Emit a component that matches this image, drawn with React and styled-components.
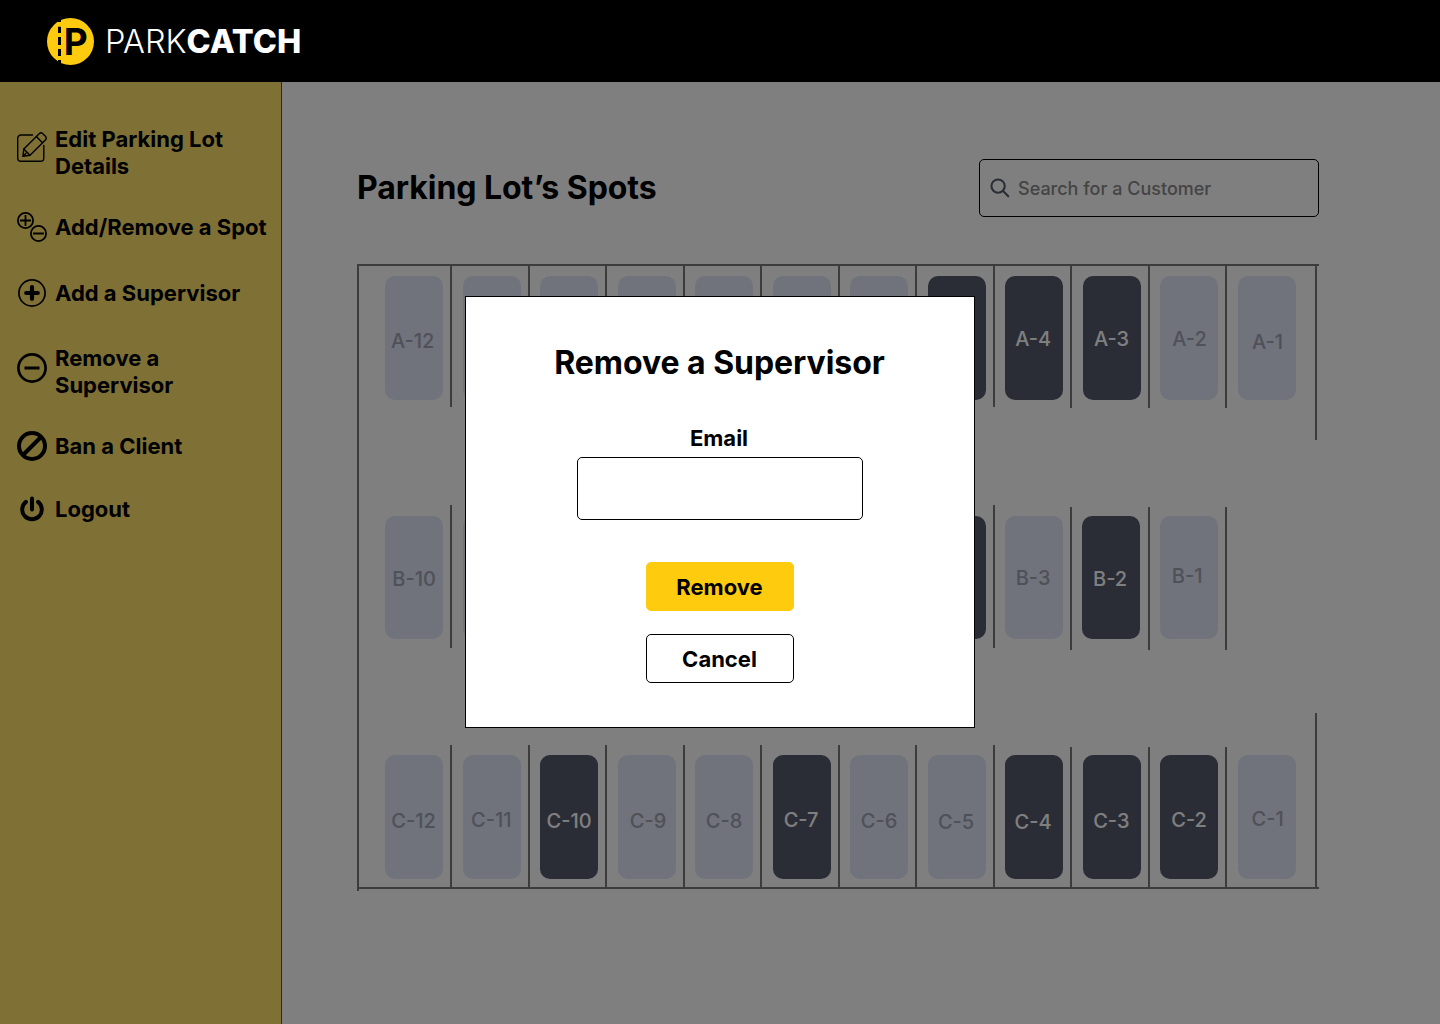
import React from "react";
import styled, { createGlobalStyle } from "styled-components";

const Global = createGlobalStyle`
  * { box-sizing: border-box; }
  body { margin: 0; font-family: Inter, "Liberation Sans", sans-serif; color: #000; }
  button, input { font: inherit; color: inherit; }
`;

const Page = styled.div`
  position: relative;
  height: 1024px;
  display: flex;
  flex-direction: column;
  overflow: hidden;
  background: #fff;
`;

const Header = styled.header`
  flex: none;
  height: 82px;
  padding: 0 47px;
  display: flex;
  align-items: center;
  background: #000;
  color: #fff;
`;

const LogoMark = styled.svg`
  width: 48px;
  height: 48px;
  margin-right: 10px;
`;

const LogoLetter = styled.text`
  font-size: 37px;
  font-weight: 700;
`;

const Wordmark = styled.span`
  margin-top: 1px;
  font-size: 32.5px;
  font-weight: 270;
  line-height: 40px;
`;

const Strong = styled.b`
  font-weight: 830;
`;

const Body = styled.div`
  flex: 1;
  display: flex;
`;

const Sidebar = styled.nav`
  flex: none;
  width: 282px;
  padding: 44px 0 0 17px;
  display: flex;
  flex-direction: column;
  background: #ffe16c;
  border-right: 1px solid #555;
`;

const NavItem = styled.a`
  display: flex;
  align-items: center;
  gap: 8px;
  min-height: 27px;
  margin-bottom: ${(p) => p.$after}px;
  font-size: 22px;
  font-weight: 700;
  line-height: 27px;
  white-space: nowrap;
`;

const NavIcon = styled.svg`
  flex: none;
  width: 30px;
  height: 30px;
  margin: -3px 0 ${(p) => p.$lift - 1}px;
  fill: none;
  stroke: #000;
`;

const Main = styled.main`
  flex: 1;
  padding: 77px 121px 0 75px;
`;

const TopRow = styled.div`
  display: flex;
  justify-content: space-between;
  align-items: center;
  height: 58px;
`;

const Title = styled.h1`
  margin: 0 0 2px;
  font-size: 32px;
  font-weight: 700;
  line-height: 39px;
  letter-spacing: -0.05px;
`;

const SearchBox = styled.label`
  width: 340px;
  height: 58px;
  padding-left: 10px;
  display: flex;
  align-items: center;
  gap: 8px;
  border: 1px solid #000;
  border-radius: 5px;
`;

const SearchIcon = styled.svg`
  width: 20px;
  height: 20px;
  fill: none;
  stroke: #54586c;
  stroke-width: 2.2;
  stroke-linecap: round;
`;

const SearchInput = styled.input`
  flex: 1;
  min-width: 0;
  padding: 0;
  border: 0;
  outline: 0;
  background: none;
  font-size: 18px;
  font-weight: 450;
  &::placeholder { color: #888; opacity: 1; }
`;

const Lot = styled.section`
  margin-top: 47px;
  width: 962px;
  height: 627px;
  border-top: 2px solid #787878;
  border-left: 2px solid #787878;
  display: grid;
  grid-template-columns: 956px 2px;
`;

const Rows = styled.div`
  height: 623px;
  width: 960px;
  border-bottom: 2px solid #787878;
  display: flex;
  flex-direction: column;
  justify-content: space-between;
`;

const RightWall = styled.div`
  height: 622px;
  display: flex;
  flex-direction: column;
  justify-content: space-between;
`;

const WallPart = styled.span`
  height: ${(p) => p.$length}px;
  background: #787878;
`;

const LotRow = styled.div`
  display: flex;
  align-items: flex-start;
  height: ${(p) => p.$height}px;
  padding-left: 15.8px;
`;

const Stall = styled.div`
  flex: none;
  width: 77.5px;
  height: ${(p) => p.$height}px;
  margin-top: ${(p) => p.$drop}px;
  padding: ${(p) => p.$inset}px 0 0 ${(p) => p.$left}px;
  border-right: ${(p) => (p.$open ? "0" : "2px solid #787878")};
`;

const Spot = styled.div`
  width: 58px;
  height: 123.5px;
  display: flex;
  align-items: center;
  justify-content: center;
  border-radius: 10px;
  font-size: 20px;
  font-weight: 500;
  line-height: 24px;
  white-space: nowrap;
  background: ${(p) => (p.$taken ? "#54586c" : "#e0e6f9")};
  color: ${(p) => (p.$taken ? "#fff" : "#9ea2b0")};
`;

const SpotLabel = styled.span`
  margin-left: ${(p) => p.$dx * 2}px;
  margin-top: ${(p) => p.$dy * 2}px;
`;

const Overlay = styled.div`
  position: absolute;
  inset: 82px 0 0 0;
  background: rgba(0, 0, 0, 0.5);
`;

const Modal = styled.form`
  position: absolute;
  left: 465px;
  top: 214px;
  width: 510px;
  height: 432px;
  padding: 46px 0 0;
  display: flex;
  flex-direction: column;
  align-items: center;
  background: #fff;
  border: 1px solid #000;
`;

const ModalTitle = styled.h2`
  margin: 0 1px 43px 0;
  font-size: 32px;
  font-weight: 700;
  line-height: 39px;
  letter-spacing: -0.05px;
`;

const FieldLabel = styled.label`
  margin: 0 2px 5px 0;
  font-size: 22px;
  font-weight: 700;
  line-height: 27px;
`;

const Field = styled.input`
  width: 286px;
  height: 63px;
  margin-bottom: 42px;
  padding: 0 12px;
  border: 1px solid #000;
  border-radius: 5px;
  background: #fff;
`;

const Button = styled.button`
  width: 148px;
  height: 49px;
  margin-bottom: 23px;
  padding: 1px 1px 0 0;
  border: 1px solid ${(p) => (p.$primary ? "#ffcb0f" : "#000")};
  border-radius: 5px;
  background: ${(p) => (p.$primary ? "#ffcb0f" : "#fff")};
  font-size: 22px;
  font-weight: 700;
`;

const NAV = [
  {
    label: <>Edit Parking Lot<br />Details</>, after: 34, lift: 10,
    icon: (
      <g strokeWidth="1.4" strokeLinejoin="round" strokeLinecap="round">
        <path d="M15.500 3H4A3.300 3.300 0 0 0 .700 6.300V26A3.300 3.300 0 0 0 4 29.300h19.500a3.300 3.300 0 0 0 3.300-3.300V13.500" />
        <path d="M6 24.200l.800-7.200L22.200 1.700a2.600 2.600 0 0 1 3.600 0l2.600 2.600a2.600 2.600 0 0 1 0 3.600L13 23.300z" />
        <path d="M6.800 17L13 23.300M19.300 4.600l6.200 6.200M6 24.200l3-3" />
      </g>
    ),
  },
  {
    label: "Add/Remove a Spot", after: 39, lift: 0,
    icon: (
      <g strokeWidth="1.8">
        <circle cx="8.500" cy="8.500" r="7.600" />
        <circle cx="21.500" cy="21.500" r="7.600" />
        <path d="M8.500 3v11M3 8.500h11M16 21.500h11" />
      </g>
    ),
  },
  {
    label: "Add a Supervisor", after: 38, lift: 0,
    icon: (
      <g>
        <circle cx="15" cy="15" r="13.100" strokeWidth="1.700" />
        <path d="M15 9.200v11.600M9.200 15h11.600" strokeWidth="4.200" strokeLinecap="round" />
      </g>
    ),
  },
  {
    label: <>Remove a<br />Supervisor</>, after: 34, lift: 6,
    icon: (
      <g strokeWidth="2.700">
        <circle cx="15" cy="15" r="13.600" />
        <path d="M7.500 15h15" strokeWidth="3" />
      </g>
    ),
  },
  {
    label: "Ban a Client", after: 36, lift: 0,
    icon: (
      <g strokeWidth="4">
        <circle cx="15" cy="15" r="13" />
        <path d="M6 24L24 6" />
      </g>
    ),
  },
  {
    label: "Logout", after: 0, lift: 0,
    icon: (
      <g strokeWidth="4" strokeLinecap="round">
        <path d="M8.900 7.900a9.800 9.800 0 1 0 12.200 0" />
        <path d="M15 4.500v11" />
      </g>
    ),
  },
];

const ROW_A = [
  { id: "A-12", dx: -1.5, dy: 3 }, {}, {}, {}, {}, {}, {}, { taken: true },
  { id: "A-4", taken: true, dx: -1, dy: 1 }, { id: "A-3", taken: true, dx: 0, dy: 1 },
  { id: "A-2", dx: 0.5, dy: 1 }, { id: "A-1", dx: 1, dy: 4.3 },
];
const ROW_B = [
  { id: "B-10", dx: 0, dy: 2 }, {}, {}, {}, {}, {}, {}, { taken: true },
  { id: "B-3", dx: -1, dy: 1 }, { id: "B-2", taken: true, dx: -0.5, dy: 2, shift: -1 },
  { id: "B-1", dx: -2, dy: -1 },
];
const ROW_C = [
  { id: "C-12", dx: -0.5, dy: 4.5 }, { id: "C-11", dx: -0.3, dy: 3.5 },
  { id: "C-10", taken: true, dx: 0, dy: 4.5 }, { id: "C-9", dx: 1.5, dy: 4.5 },
  { id: "C-8", dx: 0, dy: 4.5 }, { id: "C-7", taken: true, dx: -0.5, dy: 3.5 },
  { id: "C-6", dx: 0, dy: 4.5 }, { id: "C-5", dx: -0.5, dy: 5.7 },
  { id: "C-4", taken: true, dx: -1, dy: 5.5 }, { id: "C-3", taken: true, dx: -0.3, dy: 4.5 },
  { id: "C-2", taken: true, dx: 0, dy: 3.5 }, { id: "C-1", dx: 1, dy: 2.3 },
];

function Row({ spots, height, stall }) {
  return (
    <LotRow $height={height}>
      {spots.map((s, i) => {
        const g = stall(i);
        return (
          <Stall key={i} $height={g.height} $drop={g.drop} $inset={g.inset} $left={10.3 + (s.shift || 0)} $open={i === 11}>
            <Spot $taken={s.taken}>
              {s.id && <SpotLabel $dx={s.dx} $dy={s.dy}>{s.id}</SpotLabel>}
            </Spot>
          </Stall>
        );
      })}
    </LotRow>
  );
}

export default function App() {
  return (
    <Page>
      <Global />
      <Header>
        <LogoMark viewBox="0 0 48 48">
          <circle cx="23.500" cy="24.500" r="23.500" fill="#ffcb0f" />
          <path d="M11 0h3v5h-3zM11 9.700h3v6.300h-3zM11 20h3v8h-3zM11 32h3v7h-3zM11 43h3v5h-3z" fill="#000" />
          <LogoLetter x="16.800" y="38">P</LogoLetter>
        </LogoMark>
        <Wordmark>PARK<Strong>CATCH</Strong></Wordmark>
      </Header>
      <Body>
        <Sidebar>
          {NAV.map((n, i) => (
            <NavItem key={i} $after={n.after}>
              <NavIcon viewBox="0 0 30 30" $lift={n.lift}>{n.icon}</NavIcon>
              <span>{n.label}</span>
            </NavItem>
          ))}
        </Sidebar>
        <Main>
          <TopRow>
            <Title>Parking Lot’s Spots</Title>
            <SearchBox>
              <SearchIcon viewBox="0 0 21 21">
                <circle cx="8.500" cy="8.500" r="7" />
                <path d="M13.700 13.700l5.500 5.500" />
              </SearchIcon>
              <SearchInput placeholder="Search for a Customer" />
            </SearchBox>
          </TopRow>
          <Lot>
            <Rows>
              <Row spots={ROW_A} height={143} stall={(i) => ({ height: i < 8 ? 140.5 : 142, drop: 0, inset: 10 })} />
              <Row spots={ROW_B} height={144} stall={(i) => (i < 8 ? { height: 143, drop: 0, inset: 10.6 } : { height: 143, drop: 2, inset: 8.6 })} />
              <Row spots={ROW_C} height={142} stall={(i) => (i < 8 ? { height: 142, drop: 0, inset: 10 } : { height: 140, drop: 2, inset: 8 })} />
            </Rows>
            <RightWall>
              <WallPart $length={174} />
              <WallPart $length={175} />
            </RightWall>
          </Lot>
        </Main>
      </Body>
      <Overlay>
        <Modal onSubmit={(e) => e.preventDefault()}>
          <ModalTitle>Remove a Supervisor</ModalTitle>
          <FieldLabel htmlFor="email">Email</FieldLabel>
          <Field id="email" type="email" />
          <Button $primary>Remove</Button>
          <Button type="button">Cancel</Button>
        </Modal>
      </Overlay>
    </Page>
  );
}
